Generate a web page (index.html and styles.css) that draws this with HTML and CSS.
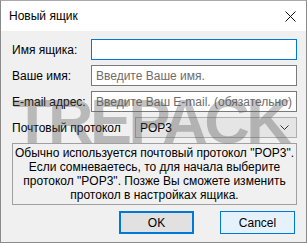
FILE: index.html
```html
<!DOCTYPE html>
<html lang="ru">
<head>
  <meta charset="UTF-8">
  <meta name="viewport" content="width=device-width, initial-scale=1.0">
  <title>Новый ящик</title>
  <link rel="stylesheet" href="styles.css">
</head>
<body>
  <div class="window">
    <div class="titlebar">
      <span class="title">Новый ящик</span>
      <svg class="close" width="11" height="11" viewBox="0 0 11 11">
        <path d="M0.5 0.5 L10.5 10.5 M10.5 0.5 L0.5 10.5" stroke="#111" stroke-width="1" fill="none"/>
      </svg>
    </div>

    <div class="content">
      <div class="row">
        <label class="label">Имя ящика:</label>
        <input class="field focused" type="text">
      </div>
      <div class="row">
        <label class="label">Ваше имя:</label>
        <input class="field" type="text" placeholder="Введите Ваше имя.">
      </div>
      <div class="row">
        <label class="label">E-mail адрес:</label>
        <input class="field" type="text" placeholder="Введите Ваш E-mail. (обязательно)">
      </div>
      <div class="row">
        <label class="label wide">Почтовый протокол</label>
        <div class="select">
          <span>POP3</span>
          <svg width="9" height="5" viewBox="0 0 9 5">
            <path d="M0.5 0.5 L4.5 4.5 L8.5 0.5" stroke="#333" stroke-width="1" fill="none"/>
          </svg>
        </div>
      </div>

      <div class="info">
        Обычно используется почтовый протокол "POP3".<br>
        Если сомневаетесь, то для начала выберите<br>
        протокол "POP3". Позже Вы сможете изменить<br>
        протокол в настройках ящика.
      </div>

      <div class="buttons">
        <button class="btn default">OK</button>
        <button class="btn hover">Cancel</button>
      </div>

      <div class="watermark">TREPACK</div>
    </div>
  </div>
</body>
</html>
```

FILE: styles.css
```css
* {
  box-sizing: border-box;
}

body {
  margin: 0;
  font-family: "Liberation Sans", Arial, sans-serif;
  font-size: 12px;
  color: #000;
  background: #fff;
}

.window {
  width: 307px;
  height: 243px;
  border: 1px solid #8a8a8a;
  border-top-color: #aaa;
  background: #f0f0f0;
  display: flex;
  flex-direction: column;
  overflow: hidden;
}

.titlebar {
  height: 30px;
  background: #fff;
  display: flex;
  align-items: center;
  justify-content: space-between;
  padding: 0 10px 0 8px;
}

.title {
  font-size: 12px;
  color: #000;
}

.content {
  position: relative;
  flex: 1;
  padding: 8px 9px 0 11px;
}

.row {
  display: flex;
  align-items: center;
  height: 21px;
  margin-bottom: 5px;
}

.label {
  width: 79px;
  flex: none;
}

.label.wide {
  width: 123px;
}

.field {
  flex: 1;
  height: 21px;
  min-width: 0;
  border: 1px solid #7a7a7a;
  background: #fff;
  padding: 0 4px;
  font-family: inherit;
  font-size: 12px;
  outline: none;
}

.field::placeholder {
  color: #6d6d6d;
}

.field.focused {
  border-color: #0078d7;
}

.select {
  flex: 1;
  height: 21px;
  border: 1px solid #adadad;
  background: #e5e5e5;
  display: flex;
  align-items: center;
  justify-content: space-between;
  padding: 0 7px 0 4px;
}

.info {
  margin-top: 2px;
  height: 62px;
  border: 1px solid #a0a0a0;
  text-align: center;
  line-height: 14px;
  padding-top: 2px;
}

.buttons {
  display: flex;
  margin-top: 6px;
  padding-left: 107px;
  gap: 26px;
}

.btn {
  width: 75px;
  height: 23px;
  font-family: inherit;
  font-size: 12px;
  color: #000;
  padding: 0;
  background: #e1e1e1;
  border: 1px solid #adadad;
}

.btn.default {
  border: 2px solid #0078d7;
}

.btn.hover {
  background: #e5f1fb;
  border-color: #0078d7;
}

.watermark {
  position: absolute;
  left: 12px;
  top: 59px;
  font-weight: bold;
  font-size: 63px;
  line-height: 63px;
  letter-spacing: -3.5px;
  color: rgba(90, 90, 90, 0.36);
  pointer-events: none;
}
```
